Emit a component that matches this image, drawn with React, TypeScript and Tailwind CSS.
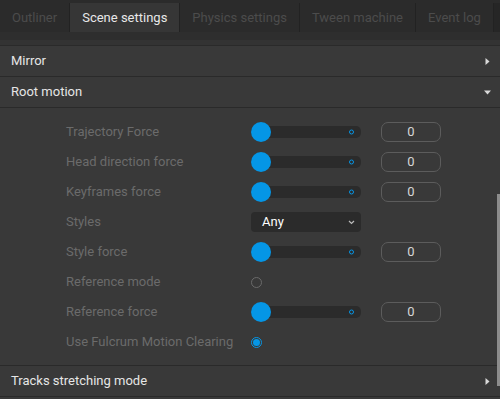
import React from 'react'

const TABS = ['Outliner', 'Scene settings', 'Physics settings', 'Tween machine', 'Event log']

type Row =
  | { label: string; kind: 'slider' }
  | { label: string; kind: 'select'; value: string }
  | { label: string; kind: 'radio'; checked: boolean }

const ROWS: Row[] = [
  { label: 'Trajectory Force', kind: 'slider' },
  { label: 'Head direction force', kind: 'slider' },
  { label: 'Keyframes force', kind: 'slider' },
  { label: 'Styles', kind: 'select', value: 'Any' },
  { label: 'Style force', kind: 'slider' },
  { label: 'Reference mode', kind: 'radio', checked: false },
  { label: 'Reference force', kind: 'slider' },
  { label: 'Use Fulcrum Motion Clearing', kind: 'radio', checked: true },
]

function Arrow({ open }: { open: boolean }) {
  return open ? (
    <svg width="7" height="5" viewBox="0 0 7 5" className="mr-[9px]">
      <path d="M0 0.5 L7 0.5 L3.5 4.5 Z" fill="#d8d8d8" />
    </svg>
  ) : (
    <svg width="5" height="7" viewBox="0 0 5 7" className="mr-[10px]">
      <path d="M0.5 0 L4.5 3.5 L0.5 7 Z" fill="#d8d8d8" />
    </svg>
  )
}

function Header({ title, open }: { title: string; open: boolean }) {
  return (
    <div className="flex h-[31px] items-center justify-between border-b border-[#2a2a2a] pl-[11px] text-[13px] text-[#e6e6e6]">
      <span>{title}</span>
      <Arrow open={open} />
    </div>
  )
}

function Slider() {
  return (
    <div className="flex items-center">
      <div className="relative flex h-[12px] w-[110px] items-center rounded-[5px] bg-[#2b2b2b]">
        <div className="absolute left-0 top-1/2 h-[20px] w-[20px] -translate-y-1/2 rounded-full bg-[#0596e6]" />
        <div className="absolute right-[7px] top-1/2 h-[5px] w-[5px] -translate-y-1/2 rounded-full border border-[#0596e6]" />
      </div>
      <div className="ml-[20px] flex h-[20px] w-[60px] items-center justify-center rounded-[7px] border border-[#5c5c5c] text-[13px] text-[#d6d6d6]">
        0
      </div>
    </div>
  )
}

function Select({ value }: { value: string }) {
  return (
    <div className="flex h-[20px] w-[110px] items-center justify-between rounded-[4px] bg-[#2b2b2b] pl-[11px] pr-[6px] text-[13px] text-white">
      <span>{value}</span>
      <svg width="7" height="5" viewBox="0 0 7 5">
        <path d="M1 1 L3.5 3.5 L6 1" stroke="#bbbbbb" strokeWidth="1.2" fill="none" />
      </svg>
    </div>
  )
}

function Radio({ checked }: { checked: boolean }) {
  return checked ? (
    <div className="flex h-[11px] w-[11px] items-center justify-center rounded-full border border-[#0596e6]">
      <div className="h-[7px] w-[7px] rounded-full bg-[#0596e6]" />
    </div>
  ) : (
    <div className="h-[11px] w-[11px] rounded-full border border-[#6a6a6a]" />
  )
}

export default function App() {
  return (
    <div
      className="relative h-[399px] w-[500px] overflow-hidden bg-[#393939]"
      style={{ fontFamily: 'Roboto, "Liberation Sans", sans-serif' }}
    >
      {/* Tab bar */}
      <div className="h-[3px] bg-[#2b2b2b]" />
      <div className="flex h-[29px] bg-[#262626]">
        {TABS.map((t) => {
          const active = t === 'Scene settings'
          return (
            <div
              key={t}
              className={
                active
                  ? 'flex items-center border-r border-[#222] bg-[#363636] px-[12px] pt-[1px] text-[13px] text-[#e8e8e8]'
                  : 'flex items-center border-r border-[#222] bg-[#2b2b2b] px-[12px] pt-[1px] text-[13px] text-[#4c4c4c]'
              }
            >
              {t}
            </div>
          )
        })}
      </div>
      <div className="h-[8px] bg-[#2e2e2e]" />
      <div className="h-[6px] border-b border-[#2a2a2a] bg-[#333333]" />

      <Header title="Mirror" open={false} />
      <Header title="Root motion" open={true} />

      {/* Root motion body */}
      <div className="border-b border-[#2a2a2a] pb-[8px] pt-[9px]">
        {ROWS.map((r) => (
          <div key={r.label} className="flex h-[30px] items-center">
            <div className="w-[251px] pl-[66px] text-[13px] text-[#6b6b6b]">{r.label}</div>
            {r.kind === 'slider' && <Slider />}
            {r.kind === 'select' && <Select value={r.value} />}
            {r.kind === 'radio' && <Radio checked={r.checked} />}
          </div>
        ))}
      </div>

      <Header title="Tracks stretching mode" open={false} />

      {/* Scrollbar */}
      <div className="absolute right-0 top-[194px] h-[192px] w-[3px] bg-[#8c8c8c]" />
    </div>
  )
}
